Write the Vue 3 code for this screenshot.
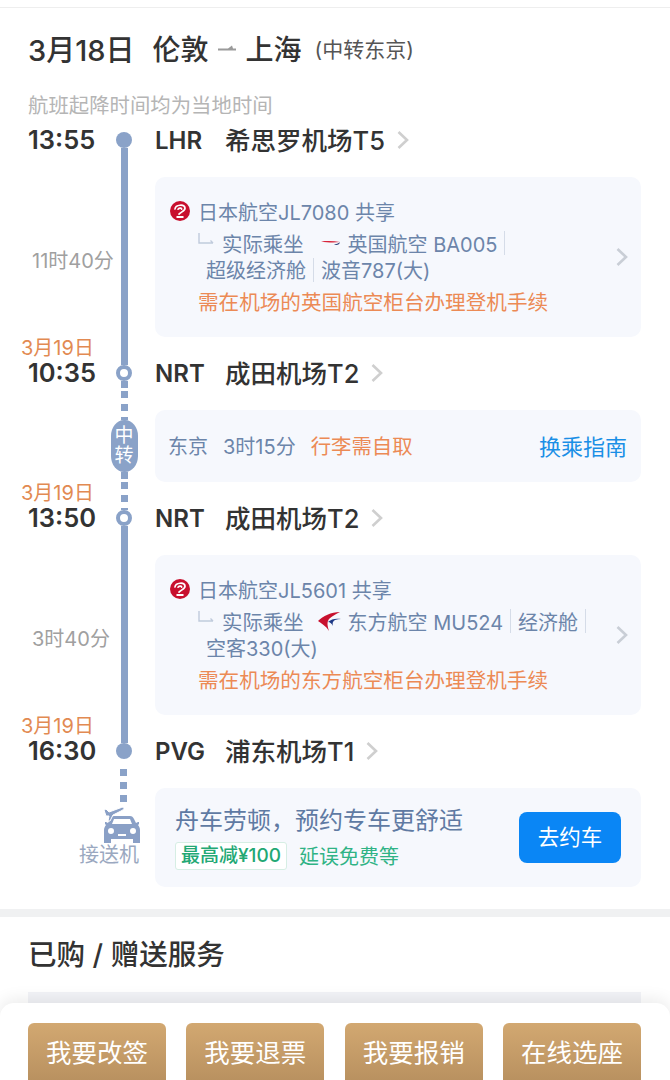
<template>
  <div class="page">
    <div class="top-bar"></div>

    <h1 class="route">
      <span class="route-date">3月18日</span>
      <span class="route-city">伦敦</span>
      <svg class="route-arrow" width="20" height="10" viewBox="0 0 20 10">
        <path d="M1 5.500h18v2H1z M11 5.500l4-3 1 3z" fill="#9a9a9a" />
      </svg>
      <span class="route-city">上海</span>
      <span class="route-via">(中转东京)</span>
    </h1>
    <p class="note">航班起降时间均为当地时间</p>

    <template v-for="item in timeline" :key="item.id">
      <!-- airport stop -->
      <div v-if="item.type === 'stop'" class="row">
        <div class="time-cell">
          <span v-if="item.date" class="stop-date">{{ item.date }}</span>
          <span class="stop-time">{{ item.time }}</span>
        </div>
        <div class="rail">
          <i class="line grow" :class="item.before"></i>
          <i class="dot" :class="{ hollow: item.hollow }"></i>
          <i class="line tail" :class="item.after"></i>
        </div>
        <div class="stop-main">
          <span class="code">{{ item.code }}</span>
          <span class="airport">{{ item.airport }}</span>
          <svg class="chevron" width="14" height="20" viewBox="0 0 14 20">
            <path d="M2.500 2l8.500 8-8.500 8" fill="none" stroke="#cfcfcf" stroke-width="2.600" />
          </svg>
        </div>
      </div>

      <!-- flight leg -->
      <div v-else-if="item.type === 'leg'" class="row">
        <div class="duration">{{ item.duration }}</div>
        <div class="rail"><i class="line grow solid"></i></div>
        <div class="card-wrap">
          <div class="flight-card">
            <div class="flight-info">
              <div class="flight-line first">
                <svg class="jal" width="20" height="20" viewBox="0 0 20 20">
                  <circle cx="10" cy="10" r="10" fill="#c8102e" />
                  <path d="M5 8C5.500 3.500 14.500 2.800 15 7c.3 2.800-3.500 3.600-6 6.200M8 8.200c1.500-1.700 3.800-1.400 3.600 0" fill="none" stroke="#fff" stroke-width="1.700" stroke-linecap="round" />
                  <rect x="6.500" y="15" width="7" height="2" fill="#fff" />
                </svg>
                <span>{{ item.flight }} 共享</span>
              </div>
              <div class="flight-line actual">
                <svg class="hook" width="18" height="14" viewBox="0 0 18 14">
                  <path d="M1 0v10h14M12.500 7.500L15 10" fill="none" stroke="#c0cbdc" stroke-width="1.400" />
                </svg>
                <span class="actual-label">实际乘坐</span>
                <svg v-if="item.logo === 'ba'" class="carrier" width="20" height="14" viewBox="0 0 20 14">
                  <path d="M0 5.500c6-.6 13-.6 19 .6-5 .8-13 .6-19-.6z" fill="#d8243a" />
                  <path d="M13 8.500c2-.2 4.500-1 6-2.200-.3 2-3 3.700-6 2.200z" fill="#2a3f78" />
                </svg>
                <svg v-else class="carrier mu" width="23" height="20" viewBox="0 0 23 20">
                  <path d="M22 1C13 1 5 5 0 10c3 2 8 5 11 10-2-6-2-9 0-12 3-3 7-5 11-7z" fill="#c8102e" />
                  <path d="M23 8c-5-1-10 0-13 3 2 0 4 2 5 4-1-3 0-5 2-6 2-.5 4-1 6-1z" fill="#1e3a86" />
                </svg>
                <span>{{ item.carrier }}</span>
                <i class="divider"></i>
                <template v-if="item.cabinFirst">
                  <span>{{ item.cabinFirst }}</span>
                  <i class="divider"></i>
                </template>
              </div>
              <div class="flight-line specs">
                <template v-if="item.cabin">
                  <span>{{ item.cabin }}</span>
                  <i class="divider"></i>
                </template>
                <span>{{ item.plane }}</span>
              </div>
              <div class="flight-line warn">{{ item.warn }}</div>
            </div>
            <svg class="chevron" width="14" height="20" viewBox="0 0 14 20">
              <path d="M2.500 2l8.500 8-8.500 8" fill="none" stroke="#c9ced6" stroke-width="2.600" />
            </svg>
          </div>
        </div>
      </div>

      <!-- transfer -->
      <div v-else-if="item.type === 'transfer'" class="row">
        <div></div>
        <div class="rail">
          <i class="line grow dash"></i>
          <span class="transfer-pill">中<br />转</span>
          <i class="line pill-tail dash"></i>
        </div>
        <div class="card-wrap">
          <div class="transfer-card">
            <span class="city">东京</span>
            <span class="layover">3时15分</span>
            <span class="baggage">行李需自取</span>
            <span class="guide">换乘指南</span>
          </div>
        </div>
      </div>
    </template>

    <!-- car service -->
    <div class="row">
      <div class="car-side">
        <i class="line car-dash dash"></i>
        <svg class="car-icon" width="36" height="36" viewBox="0 0 36 36">
          <path
            d="M10 9h16c2 0 3 1 4 3l2 4 2-1h1v2l-1 1c1 1 2 3 2 5v13h-7v-4H7v4H0V23c0-2 1-4 2-5l-1-1v-2h1l2 1 2-4c1-2 2-3 4-3zM10 12l-2 5h20l-2-5zM7 21a3 3 0 1 0 0 6 3 3 0 0 0 0-6zM29 21a3 3 0 1 0 0 6 3 3 0 0 0 0-6zM14 27v2h8v-2z"
            fill="#8aa0c6"
            fill-rule="evenodd"
          />
          <path
            d="M0 3l2-1 3 3 11-4c2-1 4-1 4 0s-1 2-3 3L9 8l-3 6H4l1-5-3 0z"
            fill="#8aa0c6"
            stroke="#fff"
            stroke-width="1"
          />
        </svg>
        <span class="car-label">接送机</span>
      </div>
      <div class="card-wrap">
        <div class="car-card">
          <div class="car-text">
            <div class="car-title">舟车劳顿，预约专车更舒适</div>
            <div class="car-perks">
              <span class="perk-tag">最高减¥100</span>
              <span class="perk-text">延误免费等</span>
            </div>
          </div>
          <button class="car-btn">去约车</button>
        </div>
      </div>
    </div>

    <div class="section-gap"></div>
    <h2 class="service-title">已购 / 赠送服务</h2>
    <div class="service-card"></div>

    <div class="footer">
      <button v-for="label in actions" :key="label" class="action-btn">{{ label }}</button>
    </div>
  </div>
</template>

<script setup>
const timeline = [
  { id: 1, type: 'stop', time: '13:55', code: 'LHR', airport: '希思罗机场T5', before: 'none', after: 'solid' },
  {
    id: 2,
    type: 'leg',
    duration: '11时40分',
    flight: '日本航空JL7080',
    logo: 'ba',
    carrier: '英国航空 BA005',
    cabin: '超级经济舱',
    plane: '波音787(大)',
    warn: '需在机场的英国航空柜台办理登机手续',
  },
  { id: 3, type: 'stop', date: '3月19日', time: '10:35', code: 'NRT', airport: '成田机场T2', before: 'solid', after: 'dash', hollow: true },
  { id: 4, type: 'transfer' },
  { id: 5, type: 'stop', date: '3月19日', time: '13:50', code: 'NRT', airport: '成田机场T2', before: 'dash', after: 'solid', hollow: true },
  {
    id: 6,
    type: 'leg',
    duration: '3时40分',
    flight: '日本航空JL5601',
    logo: 'mu',
    carrier: '东方航空 MU524',
    cabinFirst: '经济舱',
    plane: '空客330(大)',
    warn: '需在机场的东方航空柜台办理登机手续',
  },
  { id: 7, type: 'stop', date: '3月19日', time: '16:30', code: 'PVG', airport: '浦东机场T1', before: 'solid', after: 'none' },
]

const actions = ['我要改签', '我要退票', '我要报销', '在线选座']
</script>

<style>
html,
body {
  margin: 0;
  background: #fff;
}
</style>

<style scoped>
.page {
  position: relative;
  width: 670px;
  height: 1080px;
  overflow: hidden;
  background: #fff;
  font-family: Inter, "Noto Sans CJK SC", sans-serif;
  color: #333;
}

.top-bar {
  height: 7px;
  border-bottom: 1px solid #eee;
}

.route {
  display: flex;
  align-items: center;
  height: 40px;
  margin: 20px 0 0;
  padding-left: 28px;
  font-size: 28px;
  font-weight: 500;
  color: #333;
}

.route-date {
  margin-right: 18px;
  font-size: 29px;
}

.route-arrow {
  margin: 0 9px 0 8px;
}

.route-via {
  margin-left: 13px;
  font-size: 21px;
  font-weight: 400;
  color: #555;
}

.note {
  height: 24px;
  margin: 26px 0 4px;
  padding-left: 28px;
  font-size: 20.4px;
  line-height: 24px;
  color: #b5b5b5;
}

.row {
  display: grid;
  grid-template-columns: 105px 38px 1fr;
  padding-right: 29px;
}

.time-cell {
  display: flex;
  flex-direction: column;
  justify-content: flex-end;
  padding-left: 28px;
}

.stop-date {
  height: 18px;
  margin-left: -7px;
  font-size: 20px;
  line-height: 22px;
  color: #e28a52;
  white-space: nowrap;
}

.stop-time {
  height: 36px;
  font-size: 25.5px;
  font-weight: 600;
  line-height: 36px;
  color: #333;
}

.rail {
  display: flex;
  flex-direction: column;
  align-items: center;
}

.line {
  display: block;
  width: 7px;
}

.line.grow {
  flex: 1;
}

.line.tail {
  height: 10px;
}

.line.pill-tail {
  height: 10px;
}

.line.solid {
  background: #8aa2c8;
}

.line.dash {
  background: repeating-linear-gradient(to bottom, #8aa2c8 0 7px, #fff 7px 13px);
}

.line.none {
  background: transparent;
}

.dot {
  flex: none;
  box-sizing: border-box;
  width: 16px;
  height: 16px;
  border-radius: 50%;
  background: #8aa2c8;
}

.dot.hollow {
  border: 4px solid #8aa2c8;
  background: #fff;
}

.stop-main {
  display: flex;
  align-items: center;
  align-self: end;
  height: 36px;
  margin-left: 12px;
}

.code {
  width: 70px;
  font-size: 24px;
  font-weight: 600;
  color: #333;
}

.airport {
  margin-bottom: 4px;
  font-size: 25.5px;
  font-weight: 500;
  color: #333;
}

.stop-main .chevron {
  margin-left: 11px;
}

.duration {
  padding: 23px 0 0 32px;
  align-self: center;
  font-size: 20px;
  color: #a0a0a0;
  white-space: nowrap;
}

.card-wrap {
  margin-left: 12px;
  padding-top: 19px;
}

.flight-card {
  display: flex;
  align-items: center;
  justify-content: space-between;
  height: 160px;
  padding: 0 12px 0 15px;
  box-sizing: border-box;
  border-radius: 10px;
  background: #f6f8fd;
}

.flight-info {
  padding-bottom: 3px;
}

.flight-line {
  display: flex;
  align-items: center;
  font-size: 20px;
  color: #6c85aa;
  white-space: nowrap;
}

.flight-line.first {
  height: 30px;
  margin-bottom: 2px;
}

.jal {
  margin-right: 8px;
}

.flight-line.actual {
  height: 30px;
  padding-left: 28px;
}

.hook {
  margin: -6px 6px 0 0;
}

.actual-label {
  margin-right: 17px;
  font-size: 20.4px;
}

.carrier {
  margin-right: 7px;
}

.carrier.mu {
  margin-left: -3px;
}

.flight-line.specs {
  height: 23px;
  padding-left: 36px;
}

.divider {
  width: 1px;
  height: 24px;
  margin: 0 7px 0 7px;
  background: #d5dce8;
}

.flight-line.warn {
  height: 28px;
  margin-top: 6px;
  padding-left: 28px;
  font-size: 20.6px;
  color: #ec8a55;
}

.transfer-pill {
  flex: none;
  width: 27px;
  height: 52px;
  padding-top: 6px;
  box-sizing: border-box;
  border-radius: 13px / 16px;
  background: #8aa2c8;
  color: #fff;
  font-size: 19px;
  line-height: 20px;
  text-align: center;
}

.transfer-card {
  display: flex;
  align-items: center;
  height: 72px;
  padding: 0 14px 2px 13px;
  box-sizing: border-box;
  border-radius: 10px;
  background: #f6f8fd;
  font-size: 20px;
  color: #6c85aa;
}

.layover {
  margin-left: 15px;
}

.baggage {
  margin-left: 15px;
  font-size: 20.4px;
  color: #ec8a55;
}

.guide {
  margin-left: auto;
  font-size: 22px;
  color: #1b8fe6;
}

.car-side {
  grid-column: 1 / 3;
  display: flex;
  flex-direction: column;
  align-items: flex-end;
}

.line.car-dash {
  height: 38px;
  margin-right: 16px;
}

.car-icon {
  margin-right: 3px;
}

.car-label {
  margin-right: 4px;
  font-size: 20px;
  line-height: 24px;
  color: #9aa8c0;
}

.car-card {
  display: flex;
  align-items: center;
  justify-content: space-between;
  height: 99px;
  padding: 0 20px;
  box-sizing: border-box;
  border-radius: 10px;
  background: #f6f8fd;
}

.car-title {
  font-size: 24px;
  line-height: 32px;
  color: #5f7aa3;
}

.car-perks {
  display: flex;
  align-items: center;
  margin-top: 4px;
}

.perk-tag {
  box-sizing: border-box;
  height: 28px;
  padding: 0 5px;
  border: 1px solid #d6eee4;
  border-radius: 3px;
  background: #fff;
  font-size: 19px;
  font-weight: 500;
  line-height: 26px;
  color: #22a874;
}

.perk-text {
  margin-left: 12px;
  font-size: 20px;
  color: #2fb385;
}

.car-btn {
  width: 102px;
  height: 51px;
  padding: 0 0 4px;
  border: none;
  border-radius: 8px;
  background: #0a86f5;
  font-family: inherit;
  font-size: 21.5px;
  color: #fff;
}

.section-gap {
  height: 8px;
  margin-top: 22px;
  background: #f0f1f2;
}

.service-title {
  height: 38px;
  margin: 19px 0 0;
  padding-left: 28px;
  font-size: 28.5px;
  font-weight: 500;
  line-height: 38px;
  color: #333;
}

.service-card {
  height: 60px;
  margin: 18px 29px 0 28px;
  background: #f2f3f7;
}

.footer {
  position: absolute;
  left: 0;
  right: 0;
  top: 1003px;
  display: flex;
  justify-content: space-between;
  height: 110px;
  padding: 20px 29px 0 28px;
  box-sizing: border-box;
  border-radius: 14px 14px 0 0;
  background: #fff;
  box-shadow: 0 -4px 16px rgba(0, 0, 0, 0.08);
}

.action-btn {
  width: 138px;
  height: 78px;
  padding: 0 0 24px;
  border: none;
  border-radius: 6px;
  background: linear-gradient(to bottom, #d2a871, #b0895a);
  font-family: inherit;
  font-size: 25.5px;
  color: #fff;
}
</style>
